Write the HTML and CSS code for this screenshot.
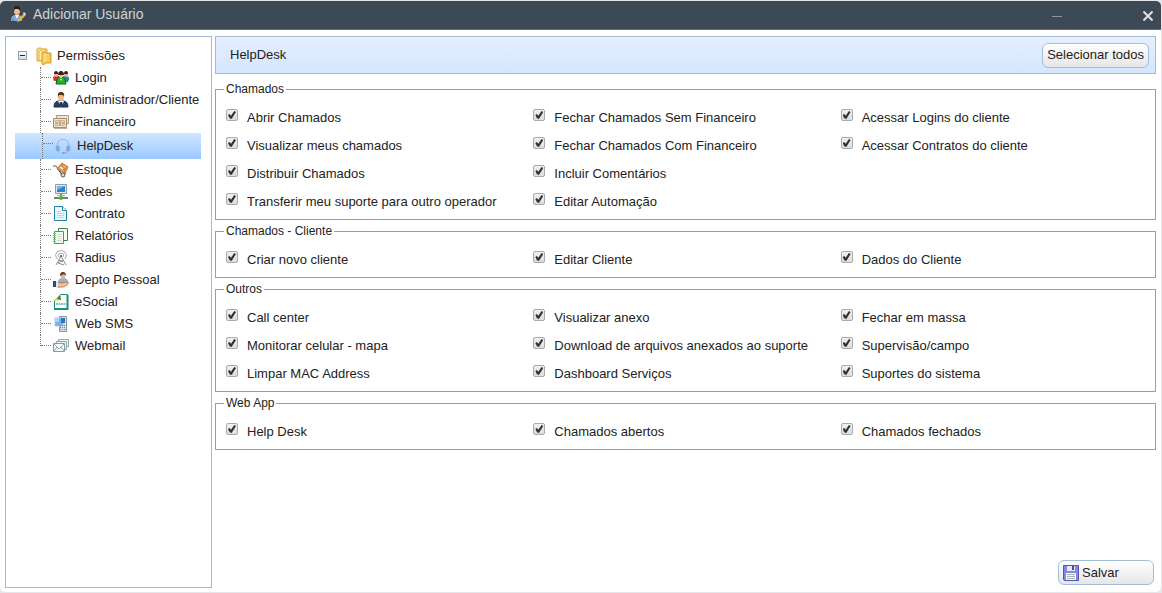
FILE: index.html
```html
<!DOCTYPE html>
<html lang="pt-BR">
<head>
<meta charset="utf-8">
<meta name="viewport" content="width=device-width, initial-scale=1">
<title>Adicionar Usuário</title>
<link rel="stylesheet" href="styles.css">
</head>
<body>
<div class="window">
  <header class="titlebar">
    <svg class="icon" viewBox="0 0 16 16"><path d="M1 14q0-5 5-5h2q4 0 4 5v1H1z" fill="#7fa9d6"/><path d="M5 9h4l-2 4z" fill="#f4f4f4"/><path d="M3 15v-2M10 15v-2" stroke="#4c719b"/><ellipse cx="7" cy="5" rx="3" ry="4" fill="#efbd8e"/><path d="M4 5q-1-5 3-5t3 5q-1-2-2-2-2 0-3 0z" fill="#2b1b14"/><path d="M8 14l6-7 2 2-6 6-3 1z" fill="#edb83d"/><path d="M13 7l1-1 2 2-1 1z" fill="#e4e4e4"/></svg>
    <h1 class="title">Adicionar Usuário</h1>
    <button class="control minimize" type="button" aria-label="Minimizar"></button>
    <button class="control" type="button" aria-label="Fechar"><svg class="close-icon" viewBox="0 0 10 10"><path d="M.500.500l9 9M9.500.500l-9 9" stroke="#e1e4e6" stroke-width="2"/></svg></button>
  </header>

  <div class="content">
    <nav class="tree" aria-label="Permissões">
      <div class="root">
        <button class="toggle" type="button" aria-label="Recolher"></button>
        <svg class="folder" viewBox="0 0 16 20"><path d="M1 3l2-1h2l1 1h5v12H1z" fill="#fce49a" stroke="#dba52f"/><path d="M3 5l6-2v13l-6-2z" fill="#ffeeb4" stroke="#e3b143"/><path d="M6 6h4l1 1h4v10H9l-1 2-2-1z" fill="#f7ca59" stroke="#d79a20"/><path d="M8 8v9M10 8v7" stroke="#fce397"/></svg>
        <span>Permissões</span>
      </div>
      <ul class="items">
        <li><a class="item" href="#login"><span class="branch"></span><svg class="icon" viewBox="0 0 16 16"><path d="M0 8q0-2 3-2h3v5H1z" fill="#d82b37"/><path d="M10 6h3q3 0 3 3l-1 3h-5z" fill="#168bb3"/><path d="M3 14l1-5q1-2 4-2t4 2l1 5z" fill="#21b51f" stroke="#12631b"/><circle cx="3" cy="5" r="2" fill="#e8a98e"/><circle cx="13" cy="5" r="2" fill="#e8a98e"/><circle cx="8" cy="6" r="2" fill="#f2bd9b"/><path d="M1 4q0-3 2-3t2 3H1M11 4q0-3 2-3t2 3h-4M5 5q0-4 3-4t3 4H5" fill="#3a1d18"/><path d="M7 9l1 2 1-2" fill="#fff"/></svg><span>Login</span></a></li>
        <li><a class="item" href="#administrador"><span class="branch"></span><svg class="icon" viewBox="0 0 16 16"><path d="M1 15q0-6 5-6h4q5 0 5 6z" fill="#273f6d" stroke="#172747"/><path d="M5 9h6l-3 6z" fill="#fff"/><path d="M7 10h2l1 3-2 2-2-2z" fill="#213456"/><ellipse cx="8" cy="5" rx="3" ry="4" fill="#efba87"/><path d="M5 5q-1-5 3-5t3 5q0-2-2-2-2 0-3 0z" fill="#563018"/></svg><span>Administrador/Cliente</span></a></li>
        <li><a class="item" href="#financeiro"><span class="branch"></span><svg class="icon" viewBox="0 0 16 16"><path d="M3.500 1.500h12v8h-12z" fill="#eee3cf" stroke="#b29a79"/><path d="M.500 4.500h13v9h-13z" fill="#f0e4d3" stroke="#a28b72"/><path d="M2.500 6.500h9v5h-9z" fill="#e6d4bb" stroke="#cdb594"/><path d="M3 9h2M9 9h2M6 10h2M6 8h2" stroke="#997c60"/><path d="M1 14.500h13" stroke="#c0ae97"/></svg><span>Financeiro</span></a></li>
        <li><a class="item selected" href="#helpdesk" aria-current="page"><span class="branch"></span><svg class="icon" viewBox="0 0 16 16"><path d="M2.500 9V7q0-5.500 5.500-5.500T13.500 7v2M14 11q0 4-5 4" fill="none" stroke="#9fb3cc"/><path d="M1 8q3-1 3.500 1v4Q1 14 1 11z" fill="#79aaf0" stroke="#8ba4c8" stroke-width=".5"/><path d="M15 8q-3-1-3.500 1v4q3.500 1 3.500-2z" fill="#79aaf0" stroke="#8ba4c8" stroke-width=".5"/><rect x="7" y="14" width="3" height="2" rx="1" fill="#8f9fb5"/></svg><span>HelpDesk</span></a></li>
        <li><a class="item" href="#estoque"><span class="branch"></span><svg class="icon" viewBox="0 0 16 16"><path d="M0 4h3l6 8M4 6l5 7 4-2" fill="none" stroke="#555"/><path d="M9 1l6 4-3 6-8-4z" fill="#e8ac64" stroke="#b96e31"/><path d="M9 1l2 5 4-1-3 6-2-3-6-1z" fill="#d68a45"/><path d="M7 5l3 2" stroke="#ffebc9" stroke-width="2"/><circle cx="10" cy="13" r="2" fill="#ddd" stroke="#555"/></svg><span>Estoque</span></a></li>
        <li><a class="item" href="#redes"><span class="branch"></span><svg class="icon" viewBox="0 0 16 16"><path d="M2.500.500h11v9h-11z" fill="#e1e6e9" stroke="#8c9ba5"/><path d="M4 2h8v6H4z" fill="#2584d5"/><path d="M4 2h8L4 6z" fill="#68bbed"/><path d="M7 10h2v4H7z" fill="#777"/><path d="M4 11.500h8" stroke="#a1a9b0"/><path d="M1 14h14" stroke="#6d8470" stroke-width="2"/><circle cx="8" cy="14" r="2" fill="#3bc032"/></svg><span>Redes</span></a></li>
        <li><a class="item" href="#contrato"><span class="branch"></span><svg class="icon" viewBox="0 0 16 16"><path d="M1.500.500h8l4 4v10h-12z" fill="#eaf5fc" stroke="#237fae"/><path d="M9.500.500v4h4" fill="#fff" stroke="#237fae"/><path d="M4 5.500h4M4 7.500h7M4 9.500h7M4 11.500h7" stroke="#b6d8ec"/></svg><span>Contrato</span></a></li>
        <li><a class="item" href="#relatorios"><span class="branch"></span><svg class="icon" viewBox="0 0 16 16"><path d="M5.500.500h9v12h-9z" fill="#f4fbf2" stroke="#36883f"/><path d="M1.500 3.500h9v12h-9z" fill="#f5faf4" stroke="#4b9b50"/><path d="M0 5.500h3M0 7.500h3M0 9.500h3M0 11.500h3M0 13.500h3" stroke="#9eaea0"/><path d="M4 6.500h5M4 8.500h5M4 10.500h5M4 12.500h5" stroke="#d1dfd0"/></svg><span>Relatórios</span></a></li>
        <li><a class="item" href="#radius"><span class="branch"></span><svg class="icon" viewBox="0 0 16 16"><path d="M4 9Q1 5 4 2q4-3 8 0 3 3 0 7M6 7Q4 4 7 3.500q5-1 3 3.500" fill="none" stroke="#a8a8a8"/><path d="M8 6L3 15M8 6l5 9M6 10l4 2M10 10l-5 3 6 2" fill="none" stroke="#8b8b8b"/><circle cx="8" cy="6" r="1" fill="#555"/></svg><span>Radius</span></a></li>
        <li><a class="item" href="#pessoal"><span class="branch"></span><svg class="icon" viewBox="0 0 16 16"><path d="M5 10q0-4 5-4t5 4v2H5z" fill="#87b5dc"/><ellipse cx="10" cy="4" rx="2" ry="3" fill="#eeb07c"/><path d="M7 4q0-4 3-4t3 4l-2-2z" fill="#65351d"/><path d="M4 10l4 1 7-1q1 1-1 3l-4 2H4z" fill="#f4c39c" stroke="#b97a53"/><path d="M0 9h3v6H0z" fill="#294c83"/><path d="M3 9h2v6H3z" fill="#d9e9f8"/></svg><span>Depto Pessoal</span></a></li>
        <li><a class="item" href="#esocial"><span class="branch"></span><svg class="icon" viewBox="0 0 16 16"><path d="M7.500.500h7v14h-13V7z" fill="#fff" stroke="#159477"/><path d="M14.500 1v14H1" fill="none" stroke="#159477" stroke-width="2"/><path d="M1 7l6-6 1 1v4z" fill="#f3df18"/><path d="M4 5l3-4 1 5z" fill="#2678a2"/><path d="M3 10h10" stroke="#8bbce1" stroke-width="2" stroke-dasharray="2 .5"/></svg><span>eSocial</span></a></li>
        <li><a class="item" href="#sms"><span class="branch"></span><svg class="icon" viewBox="0 0 16 16"><path d="M6.500.500h7v15h-7z" fill="#d8dfe6" stroke="#8795a5"/><path d="M2 2h8v8H2z" fill="#7bb1e7" stroke="#abc5df"/><path d="M2 2h4v4H2z" fill="#a9d3fb"/><path d="M8 2h4v5H8z" fill="#2e75bd"/><path d="M7 9.500h6M7 11.500h6M7 13.500h6" stroke="#77889a" stroke-dasharray="1 1"/></svg><span>Web SMS</span></a></li>
        <li><a class="item" href="#webmail"><span class="branch last"></span><svg class="icon" viewBox="0 0 16 16"><path d="M5.500 1.500h10v7h-10z" fill="#f4f8f8" stroke="#8ea5a7"/><path d="M3.500 3.500h10v8h-10z" fill="#edf4f4" stroke="#8ea5a7"/><path d="M.500 5.500h11v8h-11z" fill="#f6fafa" stroke="#849c9f"/><path d="M1 6l5 5 5-5M1 13l3-4M11 13L8 9" fill="none" stroke="#91a9ac"/></svg><span>Webmail</span></a></li>
      </ul>
    </nav>

    <main class="panel">
      <div class="panel-header">
        <h2 class="panel-title">HelpDesk</h2>
        <button class="button" type="button">Selecionar todos</button>
      </div>
      <form class="form">
        <fieldset class="group">
          <legend>Chamados</legend>
          <div class="options">
            <label class="option"><input type="checkbox" checked>Abrir Chamados</label>
            <label class="option"><input type="checkbox" checked>Fechar Chamados Sem Financeiro</label>
            <label class="option"><input type="checkbox" checked>Acessar Logins do cliente</label>
            <label class="option"><input type="checkbox" checked>Visualizar meus chamados</label>
            <label class="option"><input type="checkbox" checked>Fechar Chamados Com Financeiro</label>
            <label class="option"><input type="checkbox" checked>Acessar Contratos do cliente</label>
            <label class="option first"><input type="checkbox" checked>Distribuir Chamados</label>
            <label class="option"><input type="checkbox" checked>Incluir Comentários</label>
            <label class="option first"><input type="checkbox" checked>Transferir meu suporte para outro operador</label>
            <label class="option"><input type="checkbox" checked>Editar Automação</label>
          </div>
        </fieldset>
        <fieldset class="group">
          <legend>Chamados - Cliente</legend>
          <div class="options">
            <label class="option"><input type="checkbox" checked>Criar novo cliente</label>
            <label class="option"><input type="checkbox" checked>Editar Cliente</label>
            <label class="option"><input type="checkbox" checked>Dados do Cliente</label>
          </div>
        </fieldset>
        <fieldset class="group">
          <legend>Outros</legend>
          <div class="options">
            <label class="option"><input type="checkbox" checked>Call center</label>
            <label class="option"><input type="checkbox" checked>Visualizar anexo</label>
            <label class="option"><input type="checkbox" checked>Fechar em massa</label>
            <label class="option"><input type="checkbox" checked>Monitorar celular - mapa</label>
            <label class="option"><input type="checkbox" checked>Download de arquivos anexados ao suporte</label>
            <label class="option"><input type="checkbox" checked>Supervisão/campo</label>
            <label class="option"><input type="checkbox" checked>Limpar MAC Address</label>
            <label class="option"><input type="checkbox" checked>Dashboard Serviços</label>
            <label class="option"><input type="checkbox" checked>Suportes do sistema</label>
          </div>
        </fieldset>
        <fieldset class="group">
          <legend>Web App</legend>
          <div class="options">
            <label class="option"><input type="checkbox" checked>Help Desk</label>
            <label class="option"><input type="checkbox" checked>Chamados abertos</label>
            <label class="option"><input type="checkbox" checked>Chamados fechados</label>
          </div>
        </fieldset>
        <div class="actions">
          <button class="button save" type="button"><svg class="icon" viewBox="0 0 16 16"><path d="M.500.500h15v15h-14l-1-1z" fill="#8587e4" stroke="#5354b5"/><path d="M4 1h8v5H4z" fill="#e6e8f5"/><path d="M9 1h2v4H9z" fill="#4d5182"/><path d="M3 8h10v7H3z" fill="#f5f8f6"/><path d="M4 9.500h8M4 11.500h8M4 13.500h8" stroke="#aab5ae"/></svg>Salvar</button>
        </div>
      </form>
    </main>
  </div>
</div>
</body>
</html>
```
FILE: styles.css
```css
* {
  box-sizing: border-box;
}

body {
  margin: 0;
  padding: 1px 1px 1px 0;
  min-height: 100vh;
  display: flex;
  background: #e4e6e7;
  color: #222;
  font: 13px/16px "Liberation Sans", Arial, sans-serif;
}

button {
  font: inherit;
  color: inherit;
  cursor: pointer;
}

.window {
  flex: 1;
  display: flex;
  flex-direction: column;
  background: #fff;
  border-radius: 5px;
  overflow: hidden;
}

.titlebar {
  display: flex;
  align-items: center;
  height: 29px;
  padding: 0 3px 2px 10px;
  background: #3d4a55;
  border-bottom: 1px solid #178ca6;
  color: #ced3d7;
}

.icon {
  flex: none;
  width: 16px;
  height: 16px;
}

.title {
  flex: 1;
  margin: 0 0 0 7px;
  font-size: 14px;
  font-weight: 400;
}

.control {
  display: grid;
  place-items: center;
  width: 20px;
  height: 20px;
  margin-left: 71px;
  padding: 0;
  border: 0;
  background: none;
}

.minimize {
  margin-left: 0;
}

.minimize::before {
  content: "";
  width: 10px;
  height: 1px;
  margin-top: 4px;
  background: #8f979d;
}

.close-icon {
  width: 10px;
  height: 10px;
  margin-top: 4px;
}

.content {
  flex: 1;
  display: flex;
  gap: 3px;
  padding: 6px 5px 4px;
}

.tree {
  flex: none;
  width: 207px;
  padding: 8px 10px 8px 9px;
  border: 1px solid #a3bad0;
}

.root {
  display: flex;
  align-items: center;
  height: 22px;
  padding-left: 3px;
}

.toggle {
  display: grid;
  place-items: center;
  width: 9px;
  height: 9px;
  margin: 0 9px 2px 0;
  padding: 0;
  border: 1px solid #8ba4ba;
  background: linear-gradient(#fff, #dcdcd6);
}

.toggle::before {
  content: "";
  width: 5px;
  height: 1px;
  background: #222;
}

.folder {
  flex: none;
  width: 16px;
  height: 20px;
  margin-right: 5px;
}

.items {
  margin: 0;
  padding: 0;
  list-style: none;
}

.item {
  display: flex;
  align-items: center;
  height: 22px;
  padding-left: 25px;
  color: inherit;
  text-decoration: none;
  white-space: nowrap;
}

.item .icon {
  margin: 0 6px 0 2px;
}

.selected {
  height: 26px;
  padding-left: 27px;
  background: linear-gradient(#d0e6ff, #9bc9ff);
}

.branch {
  align-self: stretch;
  width: 11px;
  border-left: 1px dotted #777;
}

.branch::before {
  content: "";
  display: block;
  height: 10px;
  border-bottom: 1px dotted #777;
}

.branch.last {
  align-self: flex-start;
}

.panel {
  flex: 1;
  min-width: 0;
  display: flex;
  flex-direction: column;
}

.panel-header {
  display: flex;
  align-items: center;
  justify-content: space-between;
  height: 38px;
  padding: 0 6px 0 14px;
  border: 1px solid #a3bad0;
  background: linear-gradient(#e5efff, #d5e6ff);
}

.panel-title {
  margin: 0;
  font-size: 13px;
  font-weight: 400;
}

.button {
  display: flex;
  align-items: center;
  height: 25px;
  padding: 0 4px;
  border: 1px solid #a3bfd5;
  border-radius: 6px;
  background: linear-gradient(#fff, #e6e6e6);
}

.form {
  flex: 1;
  display: flex;
  flex-direction: column;
  gap: 4px;
  padding-top: 8px;
}

.group {
  margin: 0;
  padding: 7px 7px 3px 10px;
  border: 1px solid #84a3c0;
  min-width: 0;
}

.group legend {
  margin-left: -2px;
  padding: 0 2px;
  font-size: 12px;
  line-height: 15px;
}

.options {
  display: grid;
  grid-template-columns: repeat(3, 1fr);
}

.option {
  display: flex;
  align-items: flex-start;
  gap: 9px;
  height: 28px;
  padding-top: 5px;
  line-height: 18px;
}

.option.first {
  grid-column: 1;
}

.option input {
  appearance: none;
  flex: none;
  display: grid;
  width: 12px;
  height: 12px;
  margin: 0;
  border: 1px solid #aaa;
  border-radius: 2px;
  background: linear-gradient(#f0f0f0, #ddd);
}

.option input:checked::before {
  content: "";
  margin: 1px;
  background: #333;
  clip-path: polygon(0 50%, 20% 38%, 38% 58%, 78% 0, 100% 12%, 45% 100%, 20% 90%);
}

.actions {
  display: flex;
  justify-content: flex-end;
  margin-top: auto;
  padding: 0 2px 3px 0;
}

.save {
  width: 96px;
  gap: 3px;
}
```
